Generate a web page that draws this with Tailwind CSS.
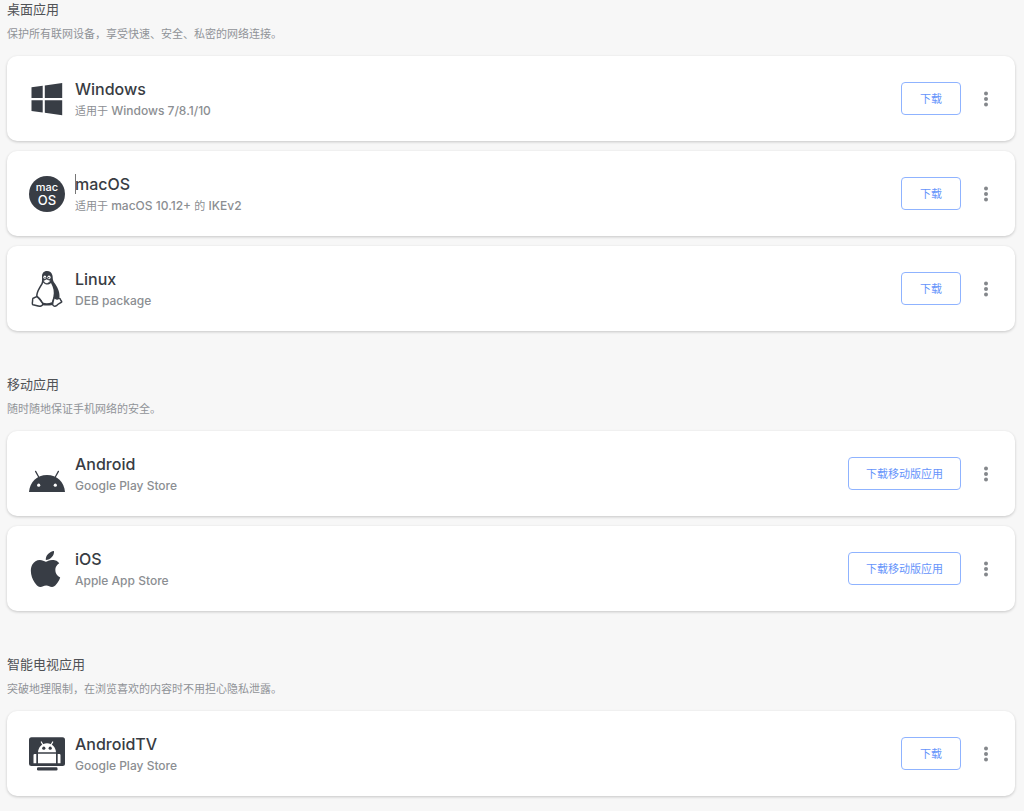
<!DOCTYPE html>
<html lang="zh-CN">
<head>
  <meta charset="UTF-8">
  <meta name="viewport" content="width=device-width, initial-scale=1.0">
  <title>应用下载</title>
  <script src="https://cdn.jsdelivr.net/npm/@tailwindcss/browser@4"></script>
</head>
<body class="bg-[#f7f7f7] min-h-screen font-['Inter','Noto_Sans_CJK_SC',sans-serif] text-[#383c43]">
  <main class="pl-[7px] pr-[9px] pb-4 flex flex-col gap-11">

    <!-- Desktop apps -->
    <section>
      <h2 class="text-[13px] leading-[18px] text-[#505256]">桌面应用</h2>
      <p class="mt-1.5 mb-3 text-[11px] leading-5 text-[#909397]">保护所有联网设备，享受快速、安全、私密的网络连接。</p>
      <div class="flex flex-col gap-2.5">
        <article class="flex items-center h-[85px] pl-[22px] pr-[19px] bg-white rounded-[10px] shadow-[0_1px_3px_rgba(0,0,0,0.2)]">
          <svg class="size-9 shrink-0" viewBox="0 0 36 36" fill="#383d45" aria-hidden="true">
            <path d="M2.500 6.200 13.700 4.700V17H2.500zM15.800 4.400 33.200 2V17H15.800zM2.500 19.200H13.700V31.500L2.500 30zM15.800 19.200H33.200V34.300L15.800 31.800z"/>
          </svg>
          <div class="ml-2.5 flex-1">
            <h3 class="text-base leading-6 font-medium">Windows</h3>
            <p class="text-xs leading-5 font-medium text-[#8b8e92]"><span class="text-[11px] font-normal">适用于</span> Windows 7/8.1/10</p>
          </div>
          <button type="button" class="h-[33px] min-w-[60px] px-[17px] pt-0.5 rounded border border-[#8fb3ff] text-[11px] text-[#6694fb]">下载</button>
          <button type="button" aria-label="更多" class="ml-[15px] w-5 h-8 flex items-center justify-center">
            <svg class="w-1 h-4" viewBox="0 0 4 16" fill="#84878b"><circle cx="2" cy="2.600" r="2"/><circle cx="2" cy="8" r="2"/><circle cx="2" cy="13.400" r="2"/></svg>
          </button>
        </article>

        <article class="flex items-center h-[85px] pl-[22px] pr-[19px] bg-white rounded-[10px] shadow-[0_1px_3px_rgba(0,0,0,0.2)]">
          <svg class="size-9 shrink-0" viewBox="0 0 36 36" aria-hidden="true">
            <circle cx="18" cy="18" r="18" fill="#383d45"/>
            <g fill="#fff" text-anchor="middle" font-family="Inter" font-weight="500">
              <text x="18" y="15" font-size="11">mac</text>
              <text x="18" y="29" font-size="13">OS</text>
            </g>
          </svg>
          <div class="relative ml-2.5 flex-1">
            <!-- text cursor -->
            <span class="absolute left-0 top-0.5 w-px h-5 bg-[#777]"></span>
            <h3 class="text-base leading-6 font-medium">macOS</h3>
            <p class="text-xs leading-5 font-medium text-[#8b8e92]"><span class="text-[11px] font-normal">适用于</span> macOS 10.12+ <span class="text-[11px] font-normal">的</span> IKEv2</p>
          </div>
          <button type="button" class="h-[33px] min-w-[60px] px-[17px] pt-0.5 rounded border border-[#8fb3ff] text-[11px] text-[#6694fb]">下载</button>
          <button type="button" aria-label="更多" class="ml-[15px] w-5 h-8 flex items-center justify-center">
            <svg class="w-1 h-4" viewBox="0 0 4 16" fill="#84878b"><circle cx="2" cy="2.600" r="2"/><circle cx="2" cy="8" r="2"/><circle cx="2" cy="13.400" r="2"/></svg>
          </button>
        </article>

        <article class="flex items-center h-[85px] pl-[22px] pr-[19px] bg-white rounded-[10px] shadow-[0_1px_3px_rgba(0,0,0,0.2)]">
          <svg class="size-9 shrink-0" viewBox="0 0 36 36" aria-hidden="true">
            <path fill="#383d45" d="M18 0c-3.400 0-5 2.400-5 5.600 0 3 .4 4.900-.8 7.100C10 16.200 7.300 20 7 25.500L10 33c4 2 12 2 16 0l4.500-7c.4-6-2.500-10.500-4.800-13.800C23 8.500 24.300 7 23.300 4 22.500 1.300 20.800 0 18 0z"/>
            <path fill="#fff" d="M14.400 11.500c2 2.600 4.900 2.600 7.600.4 2.500 4.500 3.500 9 2.300 14-.5 2-.9 3.600-1.500 5.300-3 1.200-6.500 1.200-9 .3-1-3-3.200-5-5.200-6.500.2-5.500 4-9 5.800-13.500z"/>
            <ellipse cx="15.800" cy="6.300" rx="1.400" ry="1.800" fill="#fff"/>
            <ellipse cx="20" cy="6.300" rx="1.600" ry="1.900" fill="#fff"/>
            <circle cx="16" cy="6.700" r=".7" fill="#383d45"/>
            <circle cx="19.700" cy="6.700" r=".8" fill="#383d45"/>
            <path fill="#fff" stroke="#383d45" stroke-width=".8" d="M14.300 9.600 17.700 8l3.800 1.600c-.8 1.800-2.300 2.900-3.800 2.900s-2.700-1.100-3.400-2.900z"/>
            <path fill="#fff" stroke="#383d45" stroke-width="1.500" stroke-linejoin="round" d="M8.300 25.800c2 1.400 3.300 4.200 5.200 6.300.8 1.600-.6 3.200-2.700 3.200-2.300-.4-4.800-1.200-7-1.600-1-.9-.2-2.300-.2-4.200 0-1.300 0-2 .3-2.200 1.900-.2 2.700-2 4.400-1.500zM25 27.200c.8-1.400 1.400 1 3.300.8 1.200-.2 1.500-1.300 2.700-.4.400 1.700 1.600 2.100 1.700 3.300-1.500 1.400-3.500 2-5.200 3.800-1.500 1-3.700.6-3.900-1.400.1-2.400.9-4 1.400-6.100z"/>
          </svg>
          <div class="ml-2.5 flex-1">
            <h3 class="text-base leading-6 font-medium">Linux</h3>
            <p class="text-xs leading-5 font-medium text-[#8b8e92]">DEB package</p>
          </div>
          <button type="button" class="h-[33px] min-w-[60px] px-[17px] pt-0.5 rounded border border-[#8fb3ff] text-[11px] text-[#6694fb]">下载</button>
          <button type="button" aria-label="更多" class="ml-[15px] w-5 h-8 flex items-center justify-center">
            <svg class="w-1 h-4" viewBox="0 0 4 16" fill="#84878b"><circle cx="2" cy="2.600" r="2"/><circle cx="2" cy="8" r="2"/><circle cx="2" cy="13.400" r="2"/></svg>
          </button>
        </article>
      </div>
    </section>

    <!-- Mobile apps -->
    <section>
      <h2 class="text-[13px] leading-[18px] text-[#505256]">移动应用</h2>
      <p class="mt-1.5 mb-3 text-[11px] leading-5 text-[#909397]">随时随地保证手机网络的安全。</p>
      <div class="flex flex-col gap-2.5">
        <article class="flex items-center h-[85px] pl-[22px] pr-[19px] bg-white rounded-[10px] shadow-[0_1px_3px_rgba(0,0,0,0.2)]">
          <svg class="size-9 shrink-0" viewBox="0 0 36 36" aria-hidden="true">
            <path fill="#383d45" d="M0 36C.7 26 8 19 18 19s17.300 7 18 17z"/>
            <path stroke="#383d45" stroke-width="1.300" stroke-linecap="round" d="M6.600 15.400 10 21.500M29.400 15.400 26 21.500"/>
            <circle cx="9.700" cy="29.200" r="1.600" fill="#fff"/>
            <circle cx="26.300" cy="29.200" r="1.600" fill="#fff"/>
          </svg>
          <div class="ml-2.5 flex-1">
            <h3 class="text-base leading-6 font-medium">Android</h3>
            <p class="text-xs leading-5 font-medium text-[#8b8e92]">Google Play Store</p>
          </div>
          <button type="button" class="h-[33px] min-w-[60px] px-[17px] pt-0.5 rounded border border-[#8fb3ff] text-[11px] text-[#6694fb]">下载移动版应用</button>
          <button type="button" aria-label="更多" class="ml-[15px] w-5 h-8 flex items-center justify-center">
            <svg class="w-1 h-4" viewBox="0 0 4 16" fill="#84878b"><circle cx="2" cy="2.600" r="2"/><circle cx="2" cy="8" r="2"/><circle cx="2" cy="13.400" r="2"/></svg>
          </button>
        </article>

        <article class="flex items-center h-[85px] pl-[22px] pr-[19px] bg-white rounded-[10px] shadow-[0_1px_3px_rgba(0,0,0,0.2)]">
          <svg class="size-9 shrink-0" viewBox="0 0 36 36" fill="#383d45" aria-hidden="true">
            <path d="M25 0c.6 4.300-3.500 9-8.200 9C16.400 4.500 20.500.6 25 0z"/>
            <path transform="translate(-1.500 0) scale(1.500)" d="M12.152 7.100c-.948 0-2.415-1.078-3.960-1.040-2.040.027-3.910 1.183-4.961 3.014-2.117 3.675-.546 9.003 1.519 11.990 1.013 1.454 2.208 2.990 3.792 2.939 1.520-.065 2.090-.987 3.935-.987 1.831 0 2.350.987 3.960.948 1.637-.026 2.676-1.480 3.676-2.948 1.156-1.688 1.636-3.325 1.662-3.415-.039-.013-3.182-1.221-3.220-4.857-.026-3.040 2.480-4.494 2.597-4.559-1.429-2.090-3.623-2.124-4.390-2.176-2-.156-3.675 1.090-4.610 1.090z"/>
          </svg>
          <div class="ml-2.5 flex-1">
            <h3 class="text-base leading-6 font-medium">iOS</h3>
            <p class="text-xs leading-5 font-medium text-[#8b8e92]">Apple App Store</p>
          </div>
          <button type="button" class="h-[33px] min-w-[60px] px-[17px] pt-0.5 rounded border border-[#8fb3ff] text-[11px] text-[#6694fb]">下载移动版应用</button>
          <button type="button" aria-label="更多" class="ml-[15px] w-5 h-8 flex items-center justify-center">
            <svg class="w-1 h-4" viewBox="0 0 4 16" fill="#84878b"><circle cx="2" cy="2.600" r="2"/><circle cx="2" cy="8" r="2"/><circle cx="2" cy="13.400" r="2"/></svg>
          </button>
        </article>
      </div>
    </section>

    <!-- TV apps -->
    <section>
      <h2 class="text-[13px] leading-[18px] text-[#505256]">智能电视应用</h2>
      <p class="mt-1.5 mb-3 text-[11px] leading-5 text-[#909397]">突破地理限制，在浏览喜欢的内容时不用担心隐私泄露。</p>
      <div class="flex flex-col gap-2.5">
        <article class="flex items-center h-[85px] pl-[22px] pr-[19px] bg-white rounded-[10px] shadow-[0_1px_3px_rgba(0,0,0,0.2)]">
          <svg class="size-9 shrink-0" viewBox="0 0 36 36" aria-hidden="true">
            <rect y="1.300" width="36" height="28.700" rx="2.500" fill="#383d45"/>
            <rect x="8" y="31.300" width="20.500" height="3.200" rx="1.200" fill="#383d45"/>
            <g fill="#fff">
              <path d="M9 16.300c.2-4.800 3.800-9.100 9-9.100s8.800 4.300 9 9.100z"/>
              <path d="M9 17.800h18v9.500H9zM4.500 19q0-1 1.200-1h1.600v9.300H4.500zM28.700 18h1.600q1.200 0 1.200 1v8.300h-2.800z"/>
              <path stroke="#fff" stroke-width="1.200" stroke-linecap="round" d="m12.300 6 2 3.500M23.700 6l-2 3.500"/>
            </g>
            <circle cx="14.800" cy="12.200" r="1.600" fill="#383d45"/>
            <circle cx="21.200" cy="12.200" r="1.600" fill="#383d45"/>
          </svg>
          <div class="ml-2.5 flex-1">
            <h3 class="text-base leading-6 font-medium">AndroidTV</h3>
            <p class="text-xs leading-5 font-medium text-[#8b8e92]">Google Play Store</p>
          </div>
          <button type="button" class="h-[33px] min-w-[60px] px-[17px] pt-0.5 rounded border border-[#8fb3ff] text-[11px] text-[#6694fb]">下载</button>
          <button type="button" aria-label="更多" class="ml-[15px] w-5 h-8 flex items-center justify-center">
            <svg class="w-1 h-4" viewBox="0 0 4 16" fill="#84878b"><circle cx="2" cy="2.600" r="2"/><circle cx="2" cy="8" r="2"/><circle cx="2" cy="13.400" r="2"/></svg>
          </button>
        </article>
      </div>
    </section>

  </main>
</body>
</html>
